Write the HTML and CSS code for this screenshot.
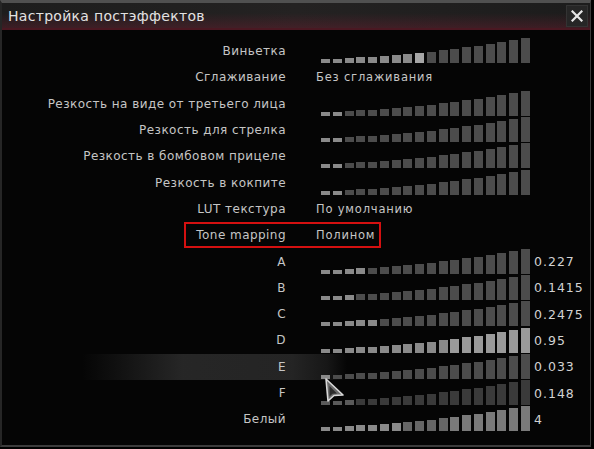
FILE: index.html
```html
<!DOCTYPE html>
<html lang="ru">
<head>
<meta charset="utf-8">
<title>Настройка постэффектов</title>
<link rel="stylesheet" href="styles.css">
</head>
<body>
<div class="window">
  <div class="titlebar">
    <span class="title">Настройка постэффектов</span>
    <button class="close" aria-label="Закрыть">
      <svg width="12" height="12" viewBox="0 0 12 12"><path d="M1.5 1.5L10.5 10.5M10.5 1.5L1.5 10.5" stroke="#e6e6e6" stroke-width="2.2" stroke-linecap="square"/></svg>
    </button>
  </div>
  <div class="rows">
    <div class="row"><span class="label">Виньетка</span><div class="slider f9"><span></span><span></span><span></span><span></span><span></span><span></span><span></span><span></span><span></span><span></span><span></span><span></span><span></span><span></span><span></span><span></span><span></span><span></span></div><span class="num"></span></div>
    <div class="row"><span class="label">Сглаживание</span><span class="value">Без сглаживания</span><span class="num"></span></div>
    <div class="row"><span class="label">Резкость на виде от третьего лица</span><div class="slider f2"><span></span><span></span><span></span><span></span><span></span><span></span><span></span><span></span><span></span><span></span><span></span><span></span><span></span><span></span><span></span><span></span><span></span><span></span></div><span class="num"></span></div>
    <div class="row"><span class="label">Резкость для стрелка</span><div class="slider f2"><span></span><span></span><span></span><span></span><span></span><span></span><span></span><span></span><span></span><span></span><span></span><span></span><span></span><span></span><span></span><span></span><span></span><span></span></div><span class="num"></span></div>
    <div class="row"><span class="label">Резкость в бомбовом прицеле</span><div class="slider f2"><span></span><span></span><span></span><span></span><span></span><span></span><span></span><span></span><span></span><span></span><span></span><span></span><span></span><span></span><span></span><span></span><span></span><span></span></div><span class="num"></span></div>
    <div class="row"><span class="label">Резкость в кокпите</span><div class="slider f2"><span></span><span></span><span></span><span></span><span></span><span></span><span></span><span></span><span></span><span></span><span></span><span></span><span></span><span></span><span></span><span></span><span></span><span></span></div><span class="num"></span></div>
    <div class="row"><span class="label">LUT текстура</span><span class="value">По умолчанию</span><span class="num"></span></div>
    <div class="row"><span class="label">Tone mapping</span><span class="value">Полином</span><span class="num"></span></div>
    <div class="row"><span class="label">A</span><div class="slider f4"><span></span><span></span><span></span><span></span><span></span><span></span><span></span><span></span><span></span><span></span><span></span><span></span><span></span><span></span><span></span><span></span><span></span><span></span></div><span class="num">0.227</span></div>
    <div class="row"><span class="label">B</span><div class="slider f3"><span></span><span></span><span></span><span></span><span></span><span></span><span></span><span></span><span></span><span></span><span></span><span></span><span></span><span></span><span></span><span></span><span></span><span></span></div><span class="num">0.1415</span></div>
    <div class="row"><span class="label">C</span><div class="slider f5"><span></span><span></span><span></span><span></span><span></span><span></span><span></span><span></span><span></span><span></span><span></span><span></span><span></span><span></span><span></span><span></span><span></span><span></span></div><span class="num">0.2475</span></div>
    <div class="row"><span class="label">D</span><div class="slider f17"><span></span><span></span><span></span><span></span><span></span><span></span><span></span><span></span><span></span><span></span><span></span><span></span><span></span><span></span><span></span><span></span><span></span><span></span></div><span class="num">0.95</span></div>
    <div class="row hover"><span class="label">E</span><div class="slider f1"><span></span><span></span><span></span><span></span><span></span><span></span><span></span><span></span><span></span><span></span><span></span><span></span><span></span><span></span><span></span><span></span><span></span><span></span></div><span class="num">0.033</span></div>
    <div class="row"><span class="label">F</span><div class="slider f3 dim"><span></span><span></span><span></span><span></span><span></span><span></span><span></span><span></span><span></span><span></span><span></span><span></span><span></span><span></span><span></span><span></span><span></span><span></span></div><span class="num">0.148</span></div>
    <div class="row"><span class="label">Белый</span><div class="slider f7 mid"><span></span><span></span><span></span><span></span><span></span><span></span><span></span><span></span><span></span><span></span><span></span><span></span><span></span><span></span><span></span><span></span><span></span><span></span></div><span class="num">4</span></div>
  </div>
  <div class="highlight-box"></div>
  <svg class="cursor" width="22" height="26" viewBox="0 0 22 26"><path d="M2 2L19 18L10 18.5L4 24Z" fill="#6a6a6a" stroke="#d8d8d8" stroke-width="1.6" stroke-linejoin="round"/><path d="M5.5 9L13 16.5L8.5 16.8L5.5 19.5Z" fill="#2c2c2c"/></svg>
</div>
</body>
</html>
```

FILE: styles.css
```css
* { box-sizing: border-box; }
html, body {
  margin: 0;
  padding: 0;
  background: #000;
}
body {
  width: 594px;
  height: 449px;
  overflow: hidden;
  font-family: "DejaVu Sans", "Liberation Sans", sans-serif;
}
.window {
  position: relative;
  width: 591px;
  height: 447px;
  background: #050505;
  border-top: 3px solid #505050;
  border-left: 2px solid #262626;
  border-right: 1px solid #3a3a3a;
  border-bottom: 2px solid #3c3c3c;
}
.titlebar {
  height: 27px;
  display: flex;
  align-items: center;
  justify-content: space-between;
  padding: 0 2px 0 6px;
  background:
    linear-gradient(to bottom, rgba(0,0,0,0) 40%, rgba(120,30,50,0.35) 100%),
    linear-gradient(to right, #1d1d1d, #242222 50%, #1c1c1c);
  border-bottom: 2px solid #4a1822;
}
.title {
  color: #e2e2e2;
  font-size: 14px;
  letter-spacing: 0.3px;
}
.close {
  width: 22px;
  height: 22px;
  margin: 0;
  padding: 0;
  display: flex;
  align-items: center;
  justify-content: center;
  background: #262626;
  border: 1px solid #333;
}
.rows {
  padding-top: 8px;
}
.row {
  height: 26.3px;
  display: grid;
  grid-template-columns: 284px 244px 1fr;
  column-gap: 0;
  align-items: center;
}
.row.hover {
  background: linear-gradient(to right, rgba(40,40,40,0) 80px, rgba(40,40,40,0.95) 180px, rgba(38,38,38,0.95) 290px, rgba(26,26,26,0.85) 325px, rgba(20,20,20,0) 345px);
}
.label {
  text-align: right;
  color: #c6c6c6;
  font-size: 12px;
  letter-spacing: 0.45px;
  white-space: nowrap;
}
.value {
  margin-left: 30px;
  color: #c6c6c6;
  font-size: 11.5px;
  letter-spacing: 0.8px;
  white-space: nowrap;
}
.num {
  color: #d2d2d2;
  font-size: 12.5px;
  letter-spacing: 1px;
  padding-left: 4px;
}
.slider {
  align-self: stretch;
  margin-left: 35px;
  width: 209px;
  display: flex;
  align-items: flex-end;
  justify-content: space-between;
  padding-bottom: 1px;
}
.slider span {
  width: 9px;
  background: #4c4c4c;
}
.slider span:nth-child(1) { height: 4px; }
.slider span:nth-child(2) { height: 4px; }
.slider span:nth-child(3) { height: 5px; }
.slider span:nth-child(4) { height: 6px; }
.slider span:nth-child(5) { height: 6px; }
.slider span:nth-child(6) { height: 7px; }
.slider span:nth-child(7) { height: 8px; }
.slider span:nth-child(8) { height: 9px; }
.slider span:nth-child(9) { height: 10px; }
.slider span:nth-child(10) { height: 11px; }
.slider span:nth-child(11) { height: 13px; }
.slider span:nth-child(12) { height: 14px; }
.slider span:nth-child(13) { height: 16px; }
.slider span:nth-child(14) { height: 17px; }
.slider span:nth-child(15) { height: 19px; }
.slider span:nth-child(16) { height: 21px; }
.slider span:nth-child(17) { height: 23px; }
.slider span:nth-child(18) { height: 25px; }

.f1 span:nth-child(-n+1),
.f2 span:nth-child(-n+2),
.f3 span:nth-child(-n+3),
.f4 span:nth-child(-n+4),
.f5 span:nth-child(-n+5),
.f7 span:nth-child(-n+7),
.f9 span:nth-child(-n+9),
.f17 span:nth-child(-n+17) {
  background: #8a8a8a;
}
.f9 span:nth-child(9) { background: #a6a6a6; }
.f17 span:nth-child(n+12) { background: #9a9a9a; }
.dim span { background: #3a3a3a; }
.dim span:nth-child(-n+3) { background: #5a5a5a; }
.mid span { background: #666; }
.mid span:nth-child(n+12) { background: #7a7a7a; }

.highlight-box {
  position: absolute;
  left: 182px;
  top: 219px;
  width: 197px;
  height: 26px;
  border: 2px solid #d41010;
  pointer-events: none;
}
.cursor {
  position: absolute;
  left: 322px;
  top: 374px;
}
```
